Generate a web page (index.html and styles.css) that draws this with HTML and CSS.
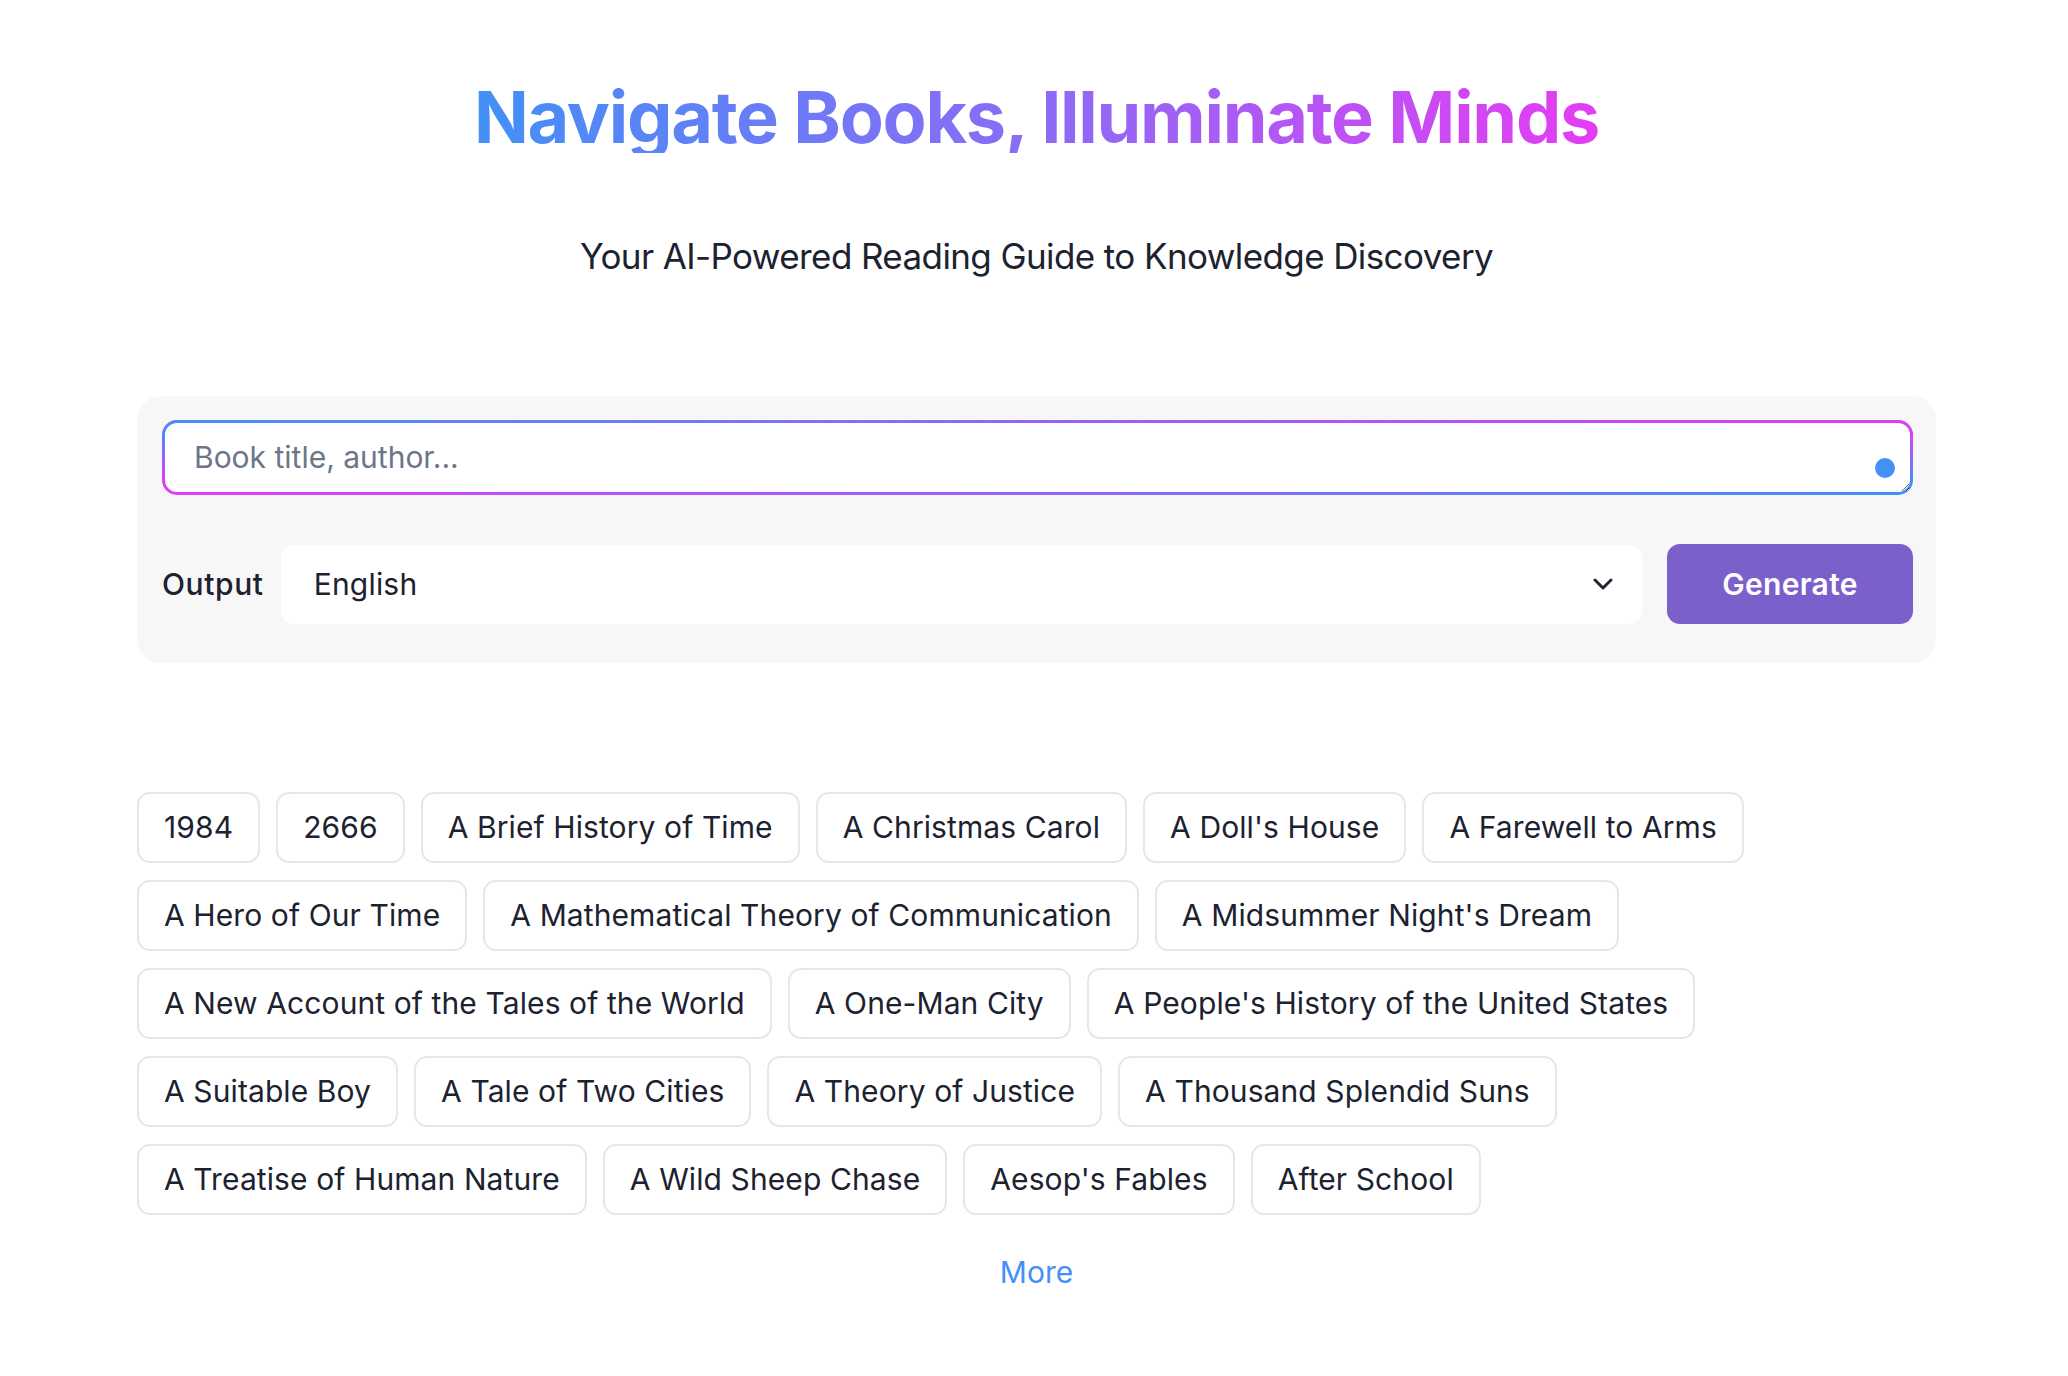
FILE: index.html
```html
<!DOCTYPE html>
<html lang="en">
<head>
<meta charset="utf-8">
<title>Navigate Books, Illuminate Minds</title>
<link rel="stylesheet" href="styles.css">
</head>
<body>
<main class="page">
  <header class="hero">
    <h1 class="title">Navigate Books, Illuminate Minds</h1>
    <p class="subtitle">Your AI-Powered Reading Guide to Knowledge Discovery</p>
  </header>

  <section class="panel">
    <div class="search">
      <textarea class="search-input" placeholder="Book title, author..."></textarea>
      <span class="search-dot"></span>
    </div>
    <div class="controls">
      <span class="output-label">Output</span>
      <div class="select">
        <span class="select-value">English</span>
        <svg class="chevron" width="20" height="12" viewBox="0 0 20 12" aria-hidden="true">
          <path d="M2 2 L10 10 L18 2" fill="none" stroke="#1f2430" stroke-width="3" stroke-linecap="round" stroke-linejoin="round"/>
        </svg>
      </div>
      <button class="generate">Generate</button>
    </div>
  </section>

  <section class="tags">
    <span class="tag">1984</span>
    <span class="tag">2666</span>
    <span class="tag">A Brief History of Time</span>
    <span class="tag">A Christmas Carol</span>
    <span class="tag">A Doll's House</span>
    <span class="tag">A Farewell to Arms</span>
    <span class="tag">A Hero of Our Time</span>
    <span class="tag">A Mathematical Theory of Communication</span>
    <span class="tag">A Midsummer Night's Dream</span>
    <span class="tag">A New Account of the Tales of the World</span>
    <span class="tag">A One-Man City</span>
    <span class="tag">A People's History of the United States</span>
    <span class="tag">A Suitable Boy</span>
    <span class="tag">A Tale of Two Cities</span>
    <span class="tag">A Theory of Justice</span>
    <span class="tag">A Thousand Splendid Suns</span>
    <span class="tag">A Treatise of Human Nature</span>
    <span class="tag">A Wild Sheep Chase</span>
    <span class="tag">Aesop's Fables</span>
    <span class="tag">After School</span>
  </section>

  <div class="more-wrap"><a class="more" href="#">More</a></div>
</main>
</body>
</html>
```

FILE: styles.css
```css
* {
  box-sizing: border-box;
}

html, body {
  margin: 0;
  padding: 0;
  background: #ffffff;
}

body {
  font-family: Inter, "Noto Sans", "Liberation Sans", sans-serif;
  color: #1c2230;
}

.page {
  margin: 0 132px 0 137px;
  padding-top: 81px;
  padding-bottom: 80px;
}

.hero {
  display: flex;
  flex-direction: column;
  align-items: center;
}

.title {
  margin: 0;
  font-size: 72px;
  line-height: 1;
  font-weight: 700;
  letter-spacing: -1.3px;
  background: linear-gradient(90deg, #4390f7 0%, #9467f5 55%, #e53cf3 100%);
  -webkit-background-clip: text;
  background-clip: text;
  color: transparent;
  width: fit-content;
}

.subtitle {
  margin: 86px 0 0;
  font-size: 35px;
  line-height: 1;
  font-weight: 400;
  letter-spacing: -0.6px;
  color: #1c2230;
}

.panel {
  margin-top: 122px;
  background: #f7f7f7;
  border-radius: 24px;
  padding: 24px 23px 39px 25px;
}

.search {
  position: relative;
  display: grid;
  height: 75px;
  border-radius: 15px;
  background: linear-gradient(90deg, #e53cf3, #4390f7);
}

.search::before {
  content: "";
  grid-area: 1 / 1;
  border-radius: 15px;
  background: linear-gradient(90deg, #4390f7, #e53cf3);
  -webkit-mask-image: linear-gradient(180deg, #000 15%, transparent 85%);
  mask-image: linear-gradient(180deg, #000 15%, transparent 85%);
}

.search-input {
  grid-area: 1 / 1;
  position: relative;
  z-index: 1;
  margin: 3px;
  height: 69px;
  min-height: 69px;
  border: none;
  outline: none;
  border-radius: 12px;
  background: #ffffff;
  font-family: Inter, "Noto Sans", "Liberation Sans", sans-serif;
  font-size: 30px;
  line-height: 45px;
  padding: 12px 60px 12px 29px;
  color: #1c2230;
  resize: vertical;
  overflow: hidden;
}

.search-input::placeholder {
  color: #6b7689;
}

.search-dot {
  position: absolute;
  z-index: 2;
  right: 18px;
  top: 38px;
  width: 20px;
  height: 20px;
  border-radius: 50%;
  background: #4390f7;
}

.controls {
  margin-top: 49px;
  display: flex;
  align-items: center;
}

.output-label {
  font-size: 30px;
  font-weight: 500;
  letter-spacing: 0.6px;
  color: #1c2230;
  margin-right: 17px;
}

.select {
  flex: 1;
  height: 79px;
  background: #ffffff;
  border-radius: 13px;
  display: flex;
  align-items: center;
  justify-content: space-between;
  padding: 0 29px 0 33px;
}

.select-value {
  font-size: 30px;
  letter-spacing: 0.2px;
  color: #1c2230;
}

.chevron {
  display: block;
}

.generate {
  margin-left: 25px;
  width: 246px;
  height: 80px;
  border: none;
  border-radius: 13px;
  background: #7b5fcb;
  color: #ffffff;
  font-family: Inter, "Noto Sans", "Liberation Sans", sans-serif;
  font-size: 30px;
  font-weight: 600;
  letter-spacing: 0.3px;
  cursor: pointer;
}

.tags {
  margin-top: 129px;
  display: flex;
  flex-wrap: wrap;
  gap: 17px 16px;
}

.tag {
  display: inline-block;
  border: 2px solid #e3e7ee;
  border-radius: 13px;
  padding: 11px 25px;
  font-size: 30px;
  line-height: 45px;
  letter-spacing: 0.1px;
  color: #1c2230;
  background: #ffffff;
  white-space: nowrap;
}

.more-wrap {
  margin-top: 35px;
  text-align: center;
}

.more {
  font-size: 30px;
  line-height: 45px;
  color: #4390f7;
  text-decoration: none;
}
```
